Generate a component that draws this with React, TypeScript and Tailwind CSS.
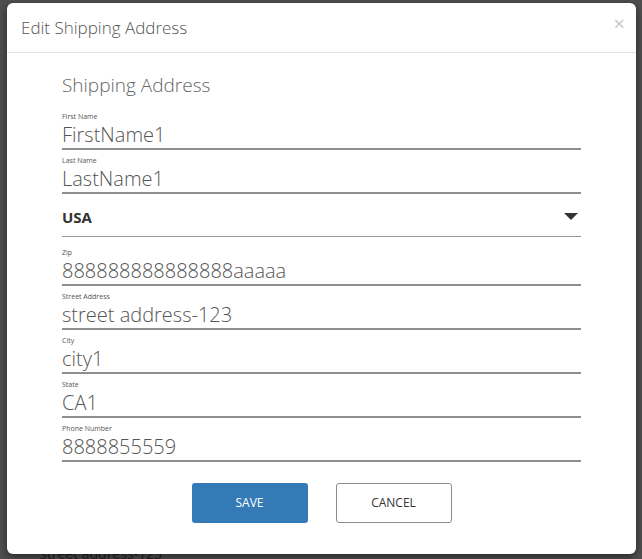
const fields = [
  { label: 'First Name', value: 'FirstName1' },
  { label: 'Last Name', value: 'LastName1' },
];

const moreFields = [
  { label: 'Zip', value: '888888888888888aaaaa' },
  { label: 'Street Address', value: 'street address-123' },
  { label: 'City', value: 'city1' },
  { label: 'State', value: 'CA1' },
  { label: 'Phone Number', value: '8888855559' },
];

function Field({ label, value, first }: { label: string; value: string; first?: boolean }) {
  return (
    <div className={first ? '' : 'mt-[6px]'}>
      <p className="text-[7px] leading-[10px] text-[#555]">{label}</p>
      <p className="text-[20px] leading-[26px] font-light text-[#555] border-b-2 border-[#8e8e8e]">
        {value}
      </p>
    </div>
  );
}

export default function App() {
  return (
    <div className="relative min-h-[559px] w-full bg-[#4f4f4f] pl-[7px] pt-[3px] overflow-hidden font-['Open_Sans',sans-serif]">
      <p className="absolute left-[40px] top-[546px] text-[14px] leading-[16px] text-[#1f1f1f]">street address-123</p>

      <div className="relative w-[629px] h-[551px] bg-white rounded-[6px] shadow-[0_3px_9px_rgba(0,0,0,0.5)]">
        <header className="h-[50px] px-[14px] flex items-center justify-between border-b border-[#e5e5e5]">
          <h2 className="text-[17px] font-light text-[#555]">Edit Shipping Address</h2>
          <span className="text-[20px] leading-none text-[#c8c8c8] mb-[8px] mr-[-3px]">×</span>
        </header>

        <div className="px-[55px] pt-[20px]">
          <h3 className="text-[19px] leading-[24px] font-light text-[#666] mb-[15px]">Shipping Address</h3>

          {fields.map((f, i) => (
            <Field key={f.label} label={f.label} value={f.value} first={i === 0} />
          ))}

          <div className="h-[43px] pt-[4px] flex items-center justify-between border-b border-[#999]">
            <span className="text-[15px] font-bold text-[#333]">USA</span>
            <svg width="14" height="8" viewBox="0 0 14 8" className="mr-[3px]">
              <path d="M0 0 L14 0 L7 7 Z" fill="#333" />
            </svg>
          </div>

          <div className="mt-[11px]">
            {moreFields.map((f) => (
              <Field key={f.label} label={f.label} value={f.value} />
            ))}
          </div>

          <div className="mt-[21px] flex justify-center gap-[28px]">
            <button className="w-[116px] h-[40px] rounded-[3px] bg-[#337ab7] text-white text-[12px]">
              SAVE
            </button>
            <button className="w-[116px] h-[40px] rounded-[3px] bg-white border border-[#8c8c8c] text-[#333] text-[12px]">
              CANCEL
            </button>
          </div>
        </div>
      </div>
    </div>
  );
}
